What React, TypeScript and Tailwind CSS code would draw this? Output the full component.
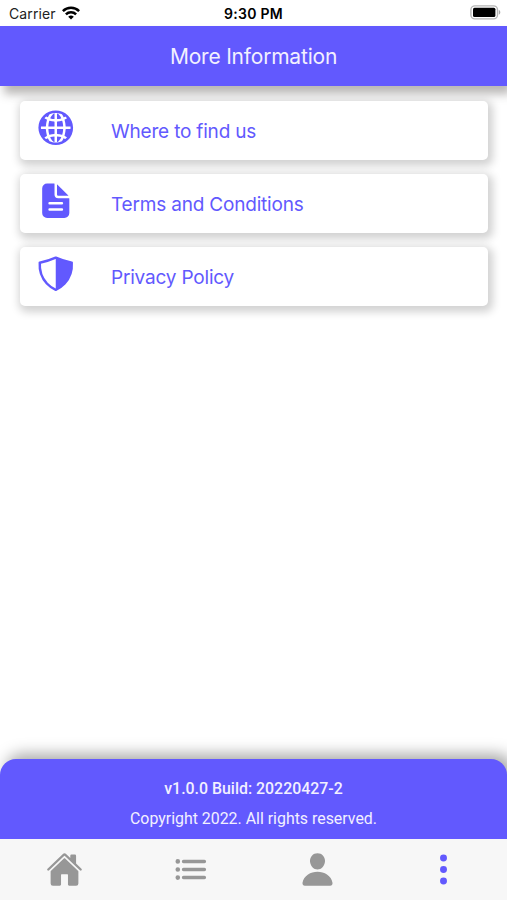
import type { ReactNode } from "react";
import {
  IoDocumentText,
  IoEllipsisVertical,
  IoGlobe,
  IoHome,
  IoList,
  IoPerson,
  IoShieldHalf,
} from "react-icons/io5";

function StatusBar() {
  return (
    <div className="grid h-[25.5px] shrink-0 grid-cols-3 items-center bg-white text-black">
      <div className="flex items-center gap-[6px] pl-[9px] pt-px">
        <span className="pt-px text-[14px] leading-none tracking-[0.1px] text-[#222]">Carrier</span>
        <svg width="18" height="14" viewBox="0 0 18 14" fill="none" stroke="black" strokeWidth="2.5">
          <path d="M.9 5.1a11.4 11.4 0 0 1 16.2 0" />
          <path d="M3.9 8.3a7.2 7.2 0 0 1 10.2 0" />
          <path d="M9 13.6 6.2 10.8a4 4 0 0 1 5.6 0Z" fill="black" stroke="none" />
        </svg>
      </div>
      <div className="pt-[3px] text-center text-[14px] leading-none font-semibold tracking-[0.3px]">9:30 PM</div>
      <div className="flex justify-end pr-[6px]">
        <svg width="31" height="15" viewBox="0 0 31 15">
          <rect x=".9" y=".9" width="26.6" height="13" rx="4" fill="white" stroke="#b5b5b5" strokeWidth="1.4" />
          <rect x="3" y="2.8" width="22.4" height="9.2" rx="1.5" fill="black" />
          <path d="M28.8 5c2 .7 2 4 0 4.7Z" fill="#aaa" />
        </svg>
      </div>
    </div>
  );
}

function Row({ icon, label }: { icon: ReactNode; label: string }) {
  return (
    <button className="flex h-[59.5px] w-full items-center rounded-[5px] bg-white pl-4 text-left text-[#6259fe] shadow-[2px_3px_8px_3px_rgba(0,0,0,0.18)]">
      <span className="w-[75px] pb-[5px]">{icon}</span>
      <span className="pt-[3px] text-[19px] leading-6 tracking-[-0.19px]">{label}</span>
    </button>
  );
}

export default function App() {
  return (
    <div className="flex h-[900px] w-[507px] flex-col overflow-hidden bg-white font-['Inter',sans-serif]">
      <StatusBar />
      <header className="flex h-[60.5px] shrink-0 items-center justify-center bg-[#6259fe] pt-[2px] text-[21px] tracking-[-0.2px] text-[#f2f0ff] shadow-[4px_8px_9px_0px_rgba(50,45,40,0.34)]">
        More Information
      </header>
      <main className="flex flex-1 flex-col gap-[13.5px] pt-[14.5px] pr-[19px] pl-5">
        <Row icon={<IoGlobe size={39.5} />} label="Where to find us" />
        <Row icon={<IoDocumentText size={39.5} />} label="Terms and Conditions" />
        <Row icon={<IoShieldHalf size={39.5} />} label="Privacy Policy" />
      </main>
      <footer className="flex h-[80px] shrink-0 flex-col items-center rounded-t-[16px] bg-[#6259fe] pt-[19px] font-['Roboto',sans-serif] text-[15.9px] text-[#f2f0ff] shadow-[6px_-5px_15px_0px_rgba(0,0,0,0.34)]">
        <p className="leading-[22px] font-medium">v1.0.0 Build: 20220427-2</p>
        <p className="mt-2 leading-[22px]">Copyright 2022. All rights reserved.</p>
      </footer>
      <nav className="relative grid h-[61px] shrink-0 grid-cols-4 justify-items-center bg-[#f7f7f7] pt-[12px] pl-px text-[#979797]">
        <IoHome size={37} />
        <IoList size={37} />
        <IoPerson size={37} />
        <IoEllipsisVertical size={37} className="text-[#6259fe]" />
      </nav>
    </div>
  );
}
